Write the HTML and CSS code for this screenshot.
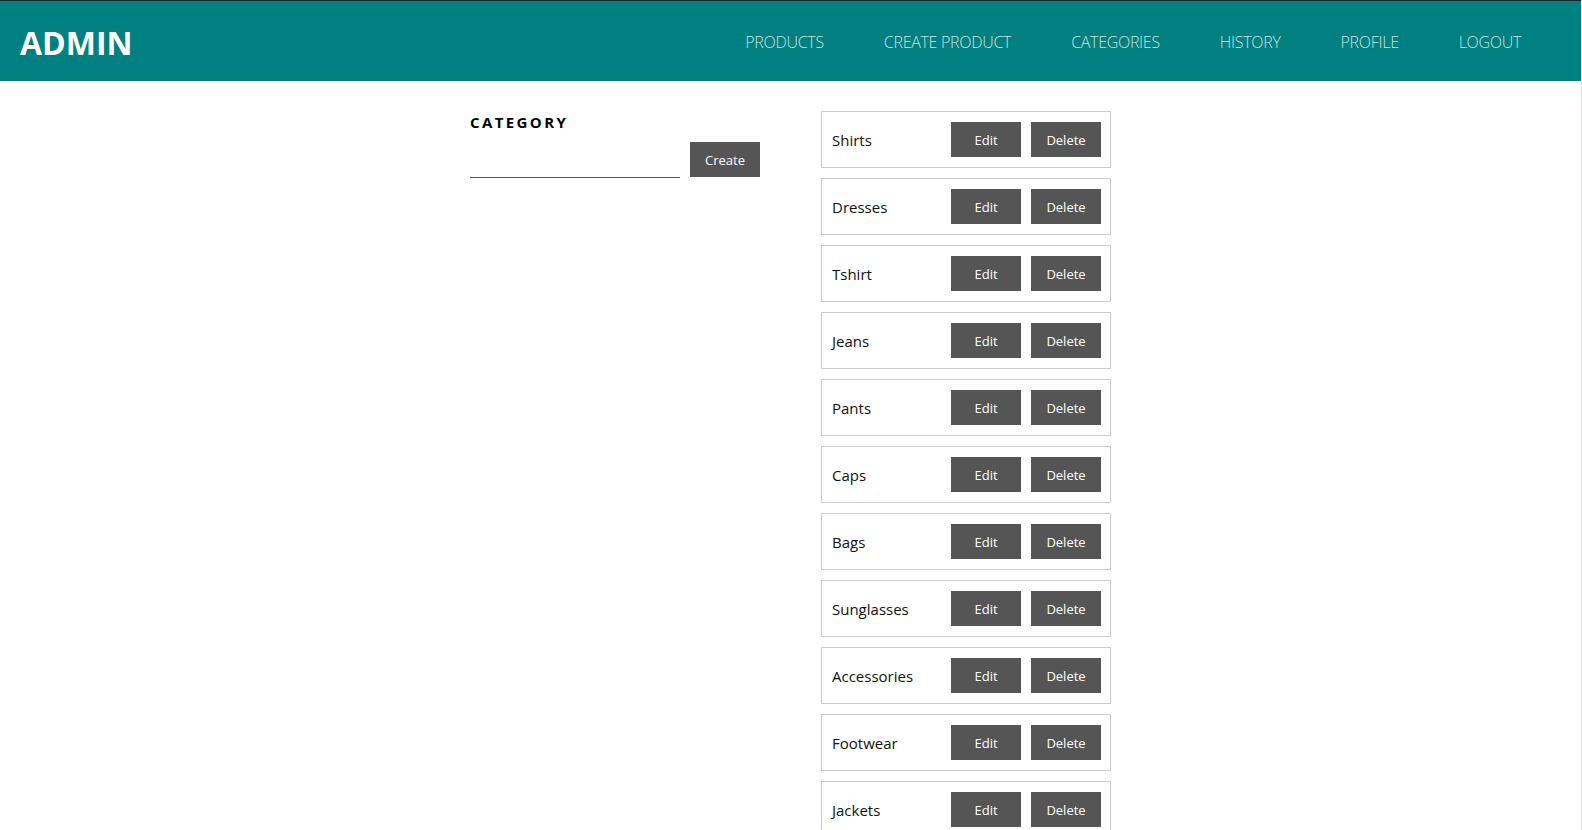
FILE: index.html
```html
<!DOCTYPE html>
<html lang="en">
<head>
<meta charset="utf-8">
<title>Admin - Categories</title>
<link rel="stylesheet" href="styles.css">
</head>
<body>
<header class="topbar">
  <div class="logo">ADMIN</div>
  <nav class="nav">
    <a href="#">PRODUCTS</a>
    <a href="#">CREATE PRODUCT</a>
    <a href="#">CATEGORIES</a>
    <a href="#">HISTORY</a>
    <a href="#">PROFILE</a>
    <a href="#">LOGOUT</a>
  </nav>
</header>
<main class="content">
  <section class="create-col">
    <h2 class="section-title">CATEGORY</h2>
    <form class="create-form">
      <input class="text-input" type="text">
      <button class="btn" type="button">Create</button>
    </form>
  </section>
  <section class="list-col">
    <div class="card"><span class="card-name">Shirts</span><button class="btn">Edit</button><button class="btn">Delete</button></div>
    <div class="card"><span class="card-name">Dresses</span><button class="btn">Edit</button><button class="btn">Delete</button></div>
    <div class="card"><span class="card-name">Tshirt</span><button class="btn">Edit</button><button class="btn">Delete</button></div>
    <div class="card"><span class="card-name">Jeans</span><button class="btn">Edit</button><button class="btn">Delete</button></div>
    <div class="card"><span class="card-name">Pants</span><button class="btn">Edit</button><button class="btn">Delete</button></div>
    <div class="card"><span class="card-name">Caps</span><button class="btn">Edit</button><button class="btn">Delete</button></div>
    <div class="card"><span class="card-name">Bags</span><button class="btn">Edit</button><button class="btn">Delete</button></div>
    <div class="card"><span class="card-name">Sunglasses</span><button class="btn">Edit</button><button class="btn">Delete</button></div>
    <div class="card"><span class="card-name">Accessories</span><button class="btn">Edit</button><button class="btn">Delete</button></div>
    <div class="card"><span class="card-name">Footwear</span><button class="btn">Edit</button><button class="btn">Delete</button></div>
    <div class="card"><span class="card-name">Jackets</span><button class="btn">Edit</button><button class="btn">Delete</button></div>
  </section>
</main>
</body>
</html>
```

FILE: styles.css
```css
* { box-sizing: border-box; }

html, body {
  margin: 0;
  padding: 0;
}

body {
  font-family: "Open Sans", "Noto Sans", sans-serif;
  background: #fff;
  color: #111;
  border-right: 1px solid #e6e6e6;
  min-height: 100vh;
}

.topbar {
  height: 81px;
  background: #008080;
  border-top: 1px solid #222;
  display: flex;
  align-items: center;
  justify-content: space-between;
  padding: 0 30px 0 20px;
}

.logo {
  color: #fff;
  font-weight: 700;
  font-size: 32px;
  margin-top: 2px;
}

.nav {
  display: flex;
  align-items: center;
  margin-top: 2px;
}

.nav a {
  color: rgba(255, 255, 255, 0.8);
  text-decoration: none;
  font-size: 16px;
  font-weight: 300;
  padding: 0 30px;
  letter-spacing: -0.3px;
}

.content {
  display: grid;
  grid-template-columns: 290px 290px;
  column-gap: 61px;
  justify-content: center;
  padding-top: 30px;
}

.section-title {
  margin: 1px 0 0 0;
  font-size: 15px;
  line-height: 20px;
  font-weight: 700;
  letter-spacing: 2.4px;
  color: #000;
}

.create-form {
  display: flex;
  align-items: flex-start;
  gap: 10px;
  margin-top: 10px;
}

.text-input {
  width: 210px;
  height: 36px;
  border: none;
  border-bottom: 1px solid #555;
  outline: none;
  background: transparent;
  font-family: inherit;
  font-size: 15px;
}

.btn {
  width: 70px;
  height: 35px;
  border: none;
  background: #555;
  color: #fff;
  font-family: "Open Sans", "Noto Sans", sans-serif;
  font-size: 13px;
  padding: 0;
  cursor: pointer;
}

.list-col {
  display: flex;
  flex-direction: column;
  gap: 10px;
}

.card {
  height: 57px;
  border: 1px solid #ccc;
  display: flex;
  align-items: center;
  gap: 10px;
  padding: 0 9px 0 10px;
}

.card-name {
  flex: 1;
  font-size: 15px;
  color: #111;
}
```
